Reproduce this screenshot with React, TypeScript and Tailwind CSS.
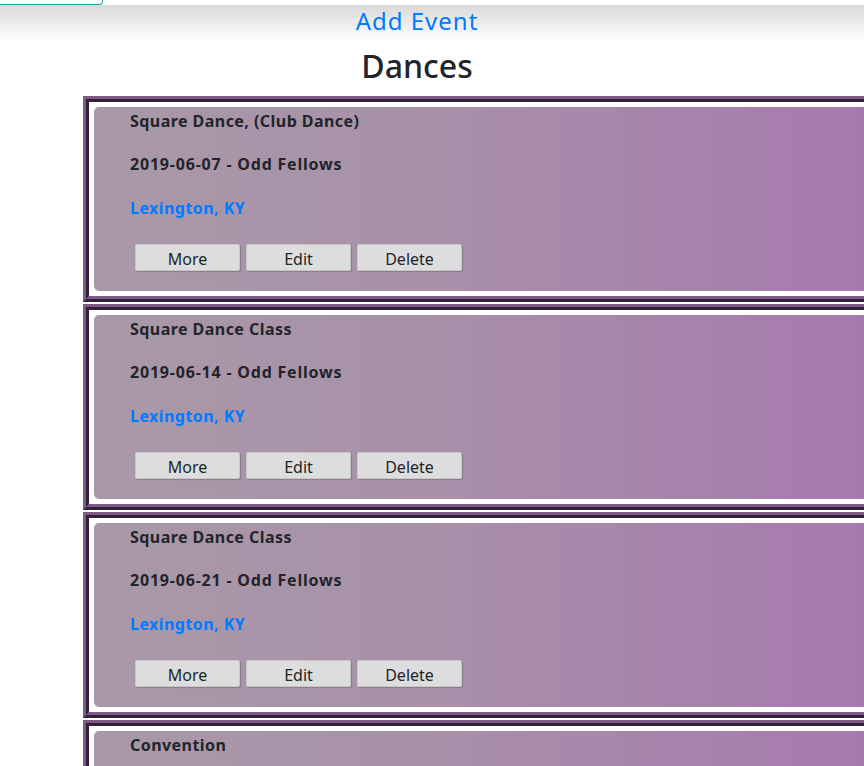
import React from "react";

type Dance = {
  title: string;
  when: string;
  place: string;
};

const dances: Dance[] = [
  { title: "Square Dance, (Club Dance)", when: "2019-06-07 - Odd Fellows", place: "Lexington, KY" },
  { title: "Square Dance Class", when: "2019-06-14 - Odd Fellows", place: "Lexington, KY" },
  { title: "Square Dance Class", when: "2019-06-21 - Odd Fellows", place: "Lexington, KY" },
  { title: "Convention", when: "2019-06-28 - Odd Fellows", place: "Lexington, KY" },
];

function DanceButton({ label }: { label: string }) {
  return (
    <button
      type="button"
      className="h-[27px] w-[105px] rounded-[2px] border border-[#c8c8c8] bg-[#dddddd] pt-[2px] text-[16px] leading-none text-[#212529] shadow-[1px_1px_1px_#8a7a8a]"
    >
      {label}
    </button>
  );
}

function DanceCard({ dance }: { dance: Dance }) {
  return (
    <div className="mb-[2px] w-[820px] border-[3px] border-t-[#7b5a86] border-l-[#7b5a86] border-b-[#33213a] border-r-[#33213a]">
      <div className="border-[3px] border-t-[#33213a] border-l-[#33213a] border-b-[#7b5a86] border-r-[#7b5a86] bg-white p-[5px]">
        <div className="h-[184px] rounded-[5px] bg-gradient-to-r from-[#a999a8] via-[#a891a9] via-40% to-[#a678ae] pl-[36px] pt-[2px] tracking-[0.45px]">
          <p className="h-6 text-[16px] font-bold leading-6 text-[#212529]">{dance.title}</p>
          <p className="mt-[19px] h-6 text-[16px] font-bold leading-6 tracking-[0.8px] text-[#212529]">{dance.when}</p>
          <a href="#" className="mt-[20px] block h-6 w-fit text-[16px] font-bold leading-6 text-[#007bff]">
            {dance.place}
          </a>
          <div className="mt-[24px] flex gap-[6px] pl-[5px] tracking-normal">
            <DanceButton label="More" />
            <DanceButton label="Edit" />
            <DanceButton label="Delete" />
          </div>
        </div>
      </div>
    </div>
  );
}

export default function App() {
  return (
    <div className="h-[766px] w-[864px] overflow-hidden bg-white font-['Noto_Sans',sans-serif]">
      <div className="h-[5px] w-[103px] rounded-br-[4px] border-b border-r border-[#17a2b8]" />
      <div className="h-[36px] bg-gradient-to-b from-[#d9d9d9] to-white">
        <div className="ml-[83px] w-[668px] text-center">
          <a href="#" className="text-[24px] leading-8 tracking-[1px] text-[#007bff]">
            Add Event
          </a>
        </div>
      </div>
      <div className="ml-[83px] w-[668px]">
        <h2 className="mt-[6px] mb-[11px] text-center text-[32px] font-medium leading-[38px] text-[#212529]">Dances</h2>
        {dances.map((d, i) => (
          <DanceCard key={i} dance={d} />
        ))}
      </div>
    </div>
  );
}
